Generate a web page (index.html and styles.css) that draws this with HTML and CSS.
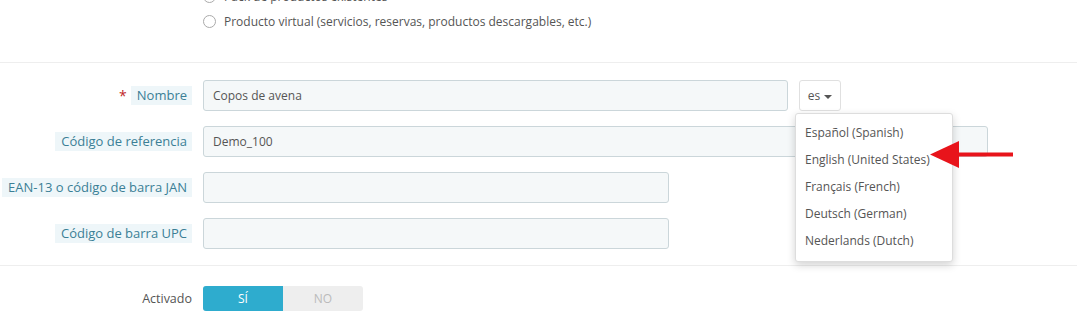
FILE: index.html
```html
<!DOCTYPE html>
<html>
<head>
    <link rel="stylesheet" href="styles.css">
</head>
<body>
    <div class="product-type">
        <div class="radio-row first">
            <span class="radio"></span>
            <span>Pack de productos existentes</span>
        </div>
        <div class="radio-row">
            <span class="radio"></span>
            <span>Producto virtual (servicios, reservas, productos descargables, etc.)</span>
        </div>
    </div>

    <div class="form-section">
        <div class="form-group">
            <div class="control-label">
                <span class="required">*</span>
                <span class="label-tooltip">Nombre</span>
            </div>
            <div class="translatable">
                <input type="text" class="field wide" value="Copos de avena">
                <button class="lang-btn">es <span class="caret"></span></button>
                <ul class="lang-menu">
                    <li>Español (Spanish)</li>
                    <li>English (United States)</li>
                    <li>Français (French)</li>
                    <li>Deutsch (German)</li>
                    <li>Nederlands (Dutch)</li>
                </ul>
                <svg class="pointer" width="90" height="30" viewBox="0 0 90 30">
                    <path d="M28 12.5 H83 V16.5 H28 Z" fill="#e8141b"/>
                    <path d="M0 14.5 L29 1 L29 28 Z" fill="#e8141b"/>
                </svg>
            </div>
        </div>
        <div class="form-group">
            <div class="control-label">
                <span class="label-tooltip">Código de referencia</span>
            </div>
            <input type="text" class="field full" value="Demo_100">
        </div>
        <div class="form-group">
            <div class="control-label">
                <span class="label-tooltip">EAN-13 o código de barra JAN</span>
            </div>
            <input type="text" class="field half" value="">
        </div>
        <div class="form-group">
            <div class="control-label">
                <span class="label-tooltip">Código de barra UPC</span>
            </div>
            <input type="text" class="field half" value="">
        </div>
    </div>

    <div class="form-section last">
        <div class="form-group">
            <div class="control-label">
                <span class="plain-label">Activado</span>
            </div>
            <div class="switch">
                <span class="switch-on">SÍ</span>
                <span class="switch-off">NO</span>
            </div>
        </div>
    </div>
</body>
</html>
```

FILE: styles.css
```css
body {
    margin: 0;
    background: #fff;
    font-family: "Open Sans", sans-serif;
    font-size: 12px;
    color: #555;
    overflow: hidden;
}
.product-type {
    margin-top: -15px;
    padding: 0 0 28px 203px;
    border-bottom: 1px solid #eee;
}
.radio-row {
    display: flex;
    align-items: center;
    gap: 8px;
    height: 26px;
    color: #555;
}
.radio-row.first {
    height: 23px;
}
.radio {
    width: 11px;
    height: 11px;
    border: 1px solid #aaa;
    border-radius: 50%;
    background: #fff;
}
.form-section {
    padding: 17px 0 16px;
    border-bottom: 1px solid #eee;
}
.form-section.last {
    padding-top: 20px;
    border-bottom: none;
}
.form-group {
    display: flex;
    align-items: center;
    margin-bottom: 15px;
}
.form-group:last-child {
    margin-bottom: 0;
}
.control-label {
    width: 192px;
    margin-right: 11px;
    display: flex;
    justify-content: flex-end;
    align-items: center;
    gap: 4px;
    font-size: 13px;
}
.required {
    color: #c02828;
    font-size: 14px;
}
.label-tooltip {
    background: #eef6f9;
    color: #3b7f96;
    padding: 1px 5px 2px 6px;
    line-height: 16px;
}
.plain-label {
    color: #555;
    font-size: 12.5px;
}
.field {
    box-sizing: border-box;
    height: 31px;
    padding: 0 9px;
    border: 1px solid #cbd6da;
    border-radius: 3px;
    background: #f5f8f9;
    font-family: "Open Sans", sans-serif;
    font-size: 12px;
    color: #555;
}
.wide { width: 585px; }
.full { width: 785px; }
.half { width: 466px; }
.translatable {
    display: flex;
    align-items: center;
    gap: 11px;
    position: relative;
}
.lang-btn {
    box-sizing: border-box;
    height: 31px;
    width: 42px;
    padding: 0;
    border: 1px solid #e0e0e0;
    border-radius: 3px;
    background: #fff;
    font-family: "Open Sans", sans-serif;
    font-size: 12px;
    color: #555;
}
.caret {
    display: inline-block;
    width: 0;
    height: 0;
    border-left: 4px solid transparent;
    border-right: 4px solid transparent;
    border-top: 4px solid #555;
    vertical-align: middle;
    margin-left: 1px;
}
.lang-menu {
    position: absolute;
    left: 592px;
    top: 33px;
    width: 158px;
    box-sizing: border-box;
    margin: 0;
    padding: 5px 0 7px;
    list-style: none;
    background: #fff;
    border: 1px solid #ddd;
    border-radius: 3px;
    box-shadow: 0 3px 8px rgba(0,0,0,0.18);
    z-index: 2;
}
.lang-menu li {
    height: 27px;
    line-height: 27px;
    padding-left: 9px;
    color: #555;
    font-size: 12px;
}
.pointer {
    position: absolute;
    left: 727px;
    top: 60px;
    z-index: 3;
}
.switch {
    display: flex;
    width: 160px;
    height: 25px;
    border-radius: 3px;
    overflow: hidden;
    background: #eee;
    font-size: 12px;
}
.switch span {
    flex: 1;
    text-align: center;
    line-height: 25px;
}
.switch-on {
    background: #2eacce;
    color: #fff;
}
.switch-off {
    color: #bbb;
}
```
